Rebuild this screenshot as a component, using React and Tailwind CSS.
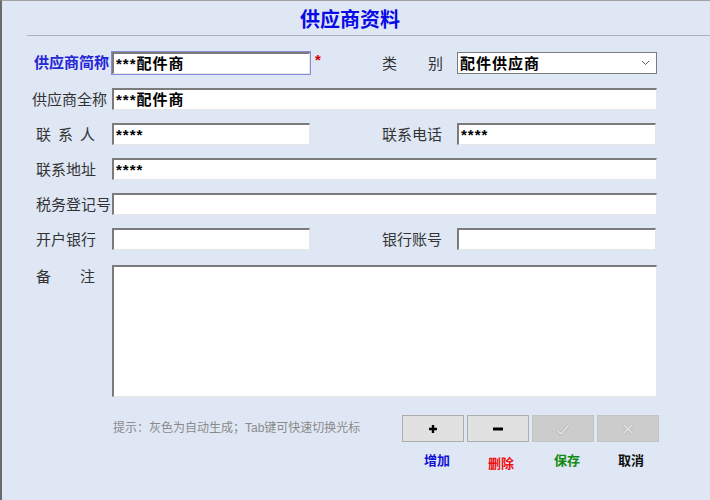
import React from "react";

const font = { fontFamily: '"Liberation Sans", "Noto Sans CJK SC", sans-serif' };

const inputCls =
  "h-[22px] bg-white border-t-2 border-l-2 border-b border-r border-t-[#7b7b7b] border-l-[#7b7b7b] border-b-[#e6e6e6] border-r-[#e6e6e6] pl-[2px] flex items-center text-[15px] font-bold text-black tracking-[1px] leading-none shrink-0";

const Field = ({ value, className = "", focused }) => (
  <div className={`${inputCls} ${className} ${focused ? "outline outline-1 outline-[#8a8ad6]" : ""}`}>
    {value}
  </div>
);

const Label = ({ children, className = "" }) => (
  <div className={`text-[15px] text-[#333] leading-none ${className}`}>{children}</div>
);

const SupplierForm = () => {
  return (
    <div
      className="w-[710px] h-[500px] bg-[#dfe7f5] border-l-2 border-l-[#6a6a6a] border-t border-t-[#a3a3a3] flex flex-col"
      style={font}
    >
      {/* title */}
      <div className="h-[34px] flex items-center justify-center pr-[12px] pt-[4px]">
        <h1 className="text-[20px] font-bold text-[#0a0ae6] leading-none">供应商资料</h1>
      </div>
      <div className="ml-[25px] h-px bg-[#a9b1c0]" />

      {/* form rows */}
      <div className="flex flex-col gap-[13px] pt-[15px]">
        <div className="flex items-center">
          <div className="w-[110px] pl-[32px] shrink-0">
            <span className="text-[15px] font-bold text-[#2626d6] leading-none">供应商简称</span>
          </div>
          <Field value="***配件商" className="w-[198px]" focused />
          <div className="w-[10px] pl-[5px] shrink-0 text-[#d40000] font-bold text-[15px] -mt-[6px]">*</div>
          <div className="w-[137px] pl-[62px] flex shrink-0">
            <Label className="w-[46px]">类</Label>
            <Label>别</Label>
          </div>
          <div className="w-[200px] h-[22px] bg-white border border-[#7b7b7b] flex items-center justify-between pl-[2px] pr-[6px] shrink-0">
            <span className="text-[15px] font-bold text-black tracking-[1px] leading-none">配件供应商</span>
            <svg width="9" height="6" viewBox="0 0 9 6">
              <path d="M1 1 L4.5 4.5 L8 1" fill="none" stroke="#555" strokeWidth="1" />
            </svg>
          </div>
        </div>

        <div className="flex items-center">
          <div className="w-[110px] pl-[30px] shrink-0">
            <Label>供应商全称</Label>
          </div>
          <Field value="***配件商" className="w-[545px]" />
        </div>

        <div className="flex items-center">
          <div className="w-[110px] pl-[34px] shrink-0">
            <Label className="tracking-[7px]">联系人</Label>
          </div>
          <Field value="****" className="w-[198px]" />
          <div className="w-[147px] pl-[72px] shrink-0">
            <Label>联系电话</Label>
          </div>
          <Field value="****" className="w-[199px]" />
        </div>

        <div className="flex items-center">
          <div className="w-[110px] pl-[34px] shrink-0">
            <Label>联系地址</Label>
          </div>
          <Field value="****" className="w-[545px]" />
        </div>

        <div className="flex items-center">
          <div className="w-[110px] pl-[34px] shrink-0">
            <Label className="whitespace-nowrap">税务登记号</Label>
          </div>
          <Field value="" className="w-[545px]" />
        </div>

        <div className="flex items-center">
          <div className="w-[110px] pl-[34px] shrink-0">
            <Label>开户银行</Label>
          </div>
          <Field value="" className="w-[198px]" />
          <div className="w-[147px] pl-[72px] shrink-0">
            <Label>银行账号</Label>
          </div>
          <Field value="" className="w-[199px]" />
        </div>

        <div className="flex items-start mt-[2px]">
          <div className="w-[110px] pl-[34px] pt-[4px] flex shrink-0">
            <Label className="w-[44px]">备</Label>
            <Label>注</Label>
          </div>
          <div className="w-[545px] h-[132px] bg-white border-t-2 border-l-2 border-b border-r border-t-[#7b7b7b] border-l-[#7b7b7b] border-b-[#e6e6e6] border-r-[#e6e6e6]" />
        </div>
      </div>

      {/* hint and buttons */}
      <div className="flex items-start mt-[18px]">
        <div className="w-[400px] shrink-0 pl-[111px] pt-[7px] text-[12px] text-[#8a8a8a] whitespace-nowrap leading-none">
          提示：灰色为自动生成；Tab键可快速切换光标
        </div>
        <div className="flex flex-col">
          <div className="flex gap-[3px]">
            <button className="w-[62px] h-[27px] bg-[#e1e1e1] border border-[#adadad] flex items-center justify-center">
              <svg width="10" height="10" viewBox="0 0 10 10">
                <path d="M5 1 V9 M1 5 H9" stroke="#000" strokeWidth="2.4" />
              </svg>
            </button>
            <button className="w-[62px] h-[27px] bg-[#e1e1e1] border border-[#adadad] flex items-center justify-center">
              <svg width="12" height="10" viewBox="0 0 12 10">
                <path d="M1 5 H11" stroke="#000" strokeWidth="3" />
              </svg>
            </button>
            <button className="w-[62px] h-[27px] bg-[#cccccc] border border-[#c4c4c4] flex items-center justify-center">
              <svg width="16" height="14" viewBox="0 0 16 14">
                <path d="M2 8 L6 12 L14 3" fill="none" stroke="#b8b8b8" strokeWidth="3" />
                <path d="M2 8 L6 12 L14 3" fill="none" stroke="#e6e6e6" strokeWidth="1.4" />
              </svg>
            </button>
            <button className="w-[62px] h-[27px] bg-[#cccccc] border border-[#c4c4c4] flex items-center justify-center">
              <svg width="14" height="14" viewBox="0 0 14 14">
                <path d="M3 3 L11 11 M11 3 L3 11" fill="none" stroke="#b8b8b8" strokeWidth="3" />
                <path d="M3 3 L11 11 M11 3 L3 11" fill="none" stroke="#e6e6e6" strokeWidth="1.4" />
              </svg>
            </button>
          </div>
          <div className="flex gap-[3px] mt-[12px] text-[13px] font-bold leading-none">
            <div className="w-[62px] pl-[22px] text-[#1010d8]">增加</div>
            <div className="w-[62px] pl-[21px] pt-[3px] text-[#ee1010]">删除</div>
            <div className="w-[62px] pl-[22px] text-[#108a10]">保存</div>
            <div className="w-[62px] pl-[21px] text-[#111]">取消</div>
          </div>
        </div>
      </div>
    </div>
  );
};

export default SupplierForm;
